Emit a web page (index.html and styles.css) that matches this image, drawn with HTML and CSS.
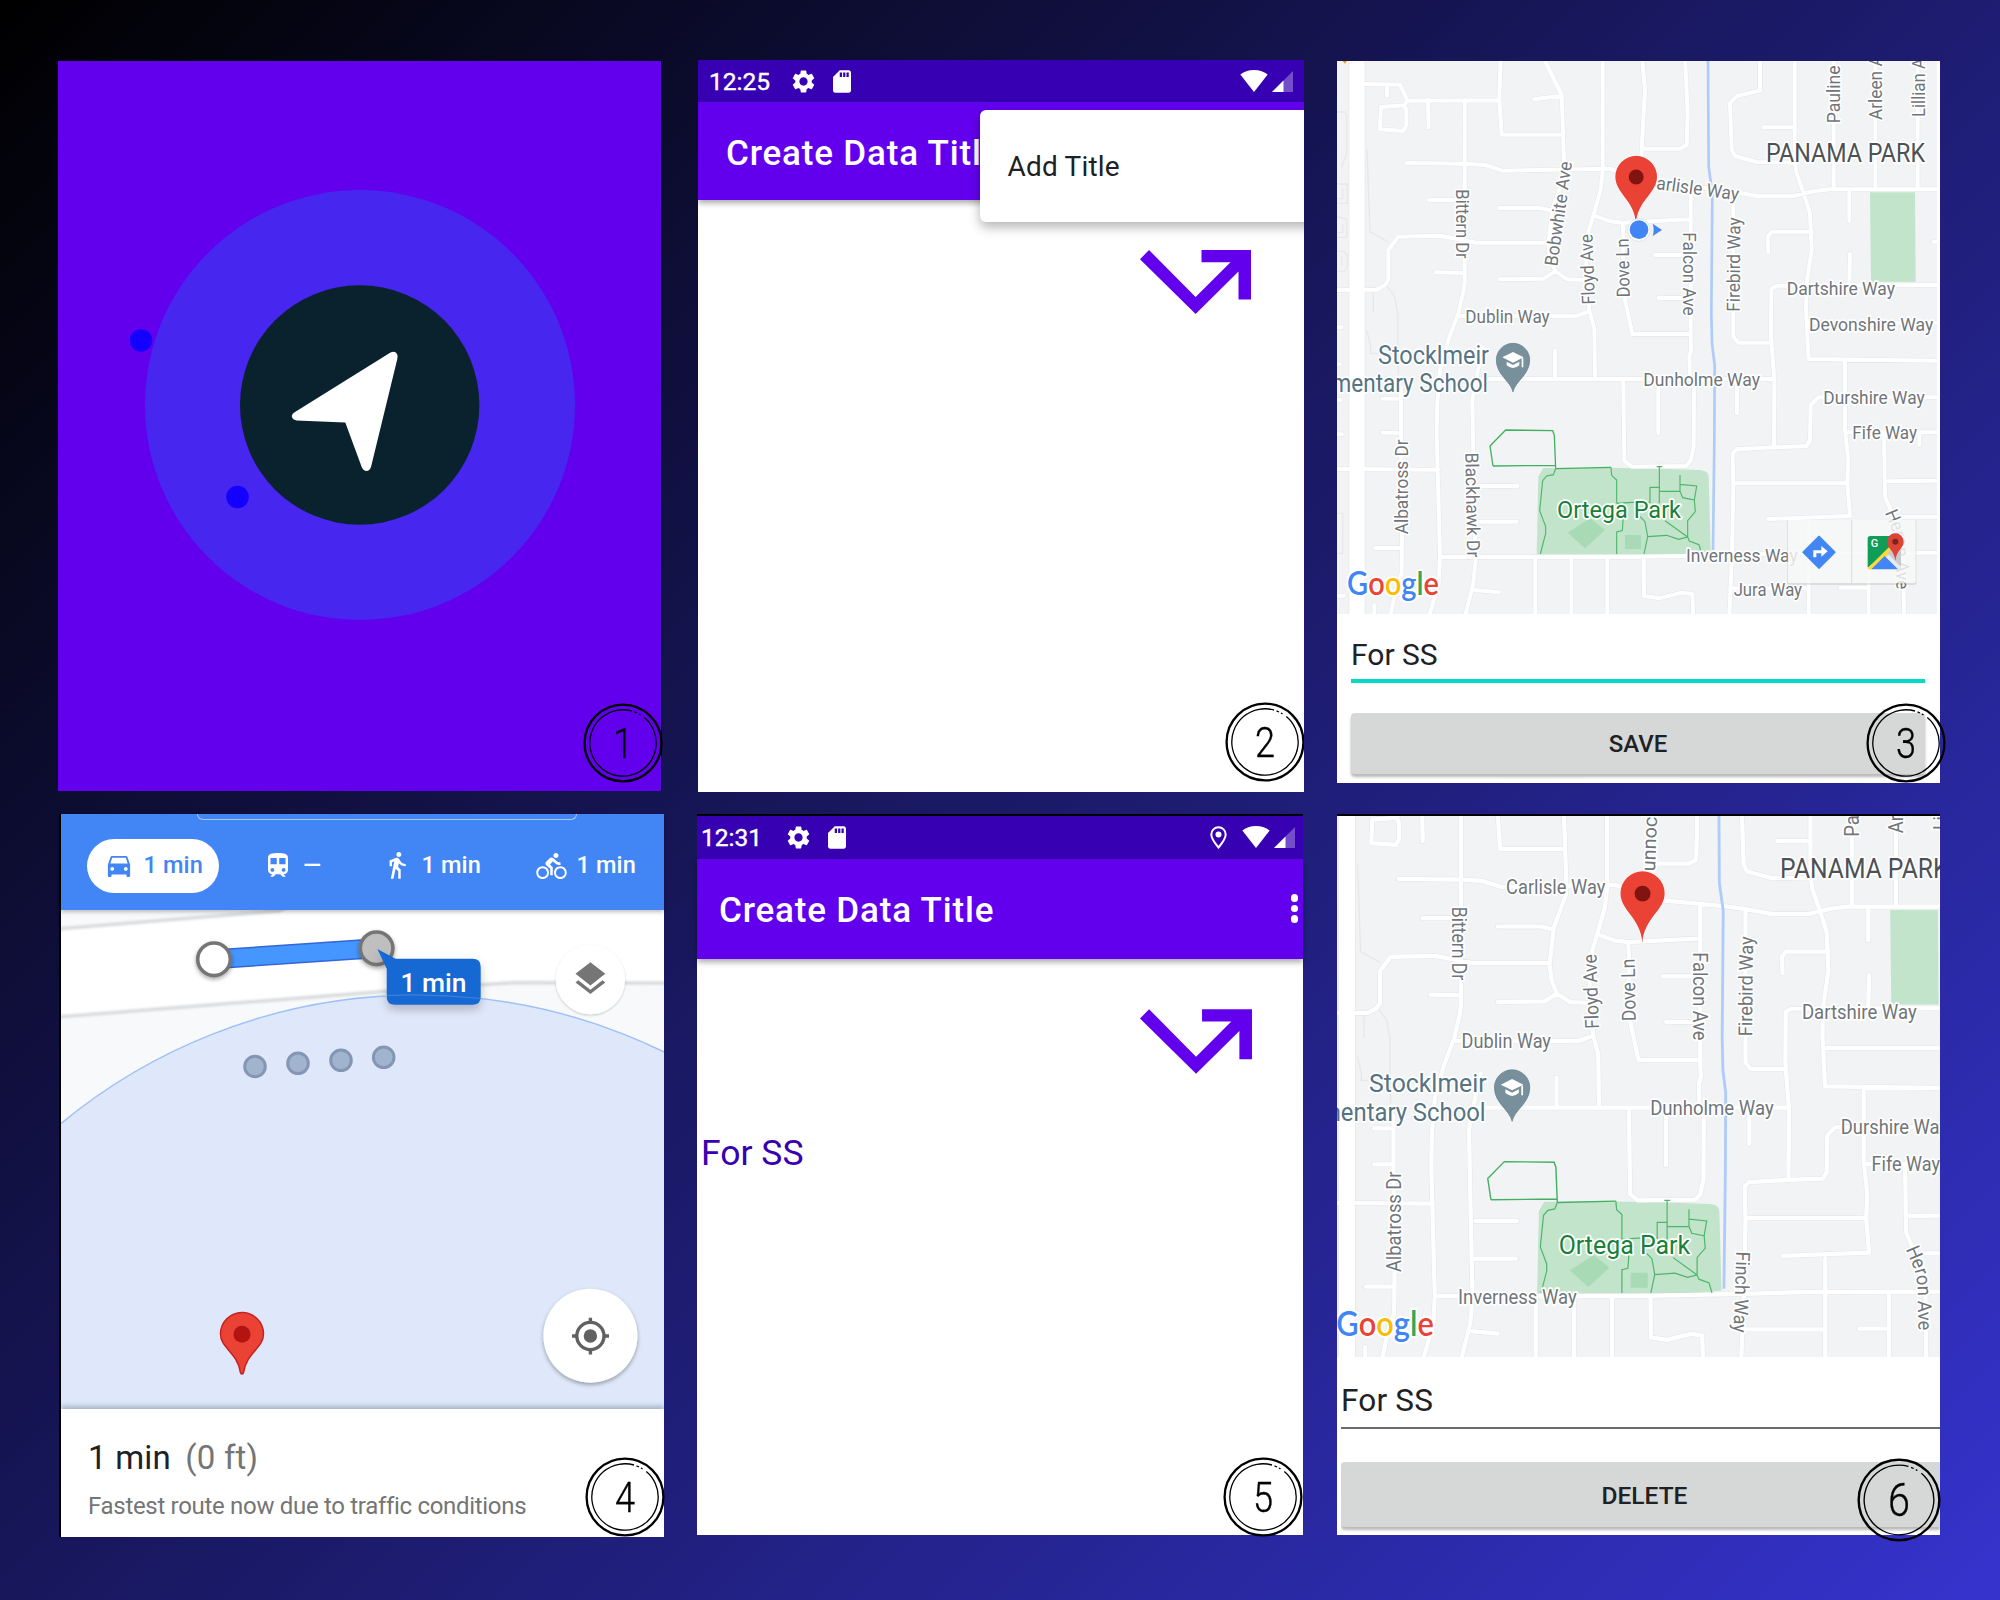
FILE: index.html
```html
<!DOCTYPE html>
<html lang="en">
<head>
<meta charset="utf-8">
<title>Create Data Title – app walkthrough</title>
<link rel="stylesheet" href="styles.css">
</head>
<body>
<svg class="defs" width="0" height="0" aria-hidden="true">
  <defs>
    <symbol id="i-gear" viewBox="2 2 20 20"><path d="M19.14 12.94c.04-.3.06-.61.06-.94 0-.32-.02-.64-.07-.94l2.03-1.58c.18-.14.23-.41.12-.61l-1.92-3.32c-.12-.22-.37-.29-.59-.22l-2.39.96c-.5-.38-1.03-.7-1.62-.94l-.36-2.54c-.04-.24-.24-.41-.48-.41h-3.84c-.24 0-.43.17-.47.41l-.36 2.54c-.59.24-1.13.57-1.62.94l-2.39-.96c-.22-.08-.47 0-.59.22L2.74 8.87c-.12.21-.08.47.12.61l2.03 1.58c-.05.3-.09.63-.09.94s.02.64.07.94l-2.03 1.58c-.18.14-.23.41-.12.61l1.92 3.32c.12.22.37.29.59.22l2.39-.96c.5.38 1.03.7 1.62.94l.36 2.54c.05.24.24.41.48.41h3.84c.24 0 .44-.17.47-.41l.36-2.54c.59-.24 1.13-.56 1.62-.94l2.39.96c.22.08.47 0 .59-.22l1.92-3.32c.12-.22.07-.47-.12-.61l-2.01-1.58zM12 15.6c-1.98 0-3.6-1.62-3.6-3.6s1.62-3.6 3.6-3.6 3.6 1.62 3.6 3.6-1.62 3.6-3.6 3.6z"/></symbol>
    <symbol id="i-sd" viewBox="4 2 16 20"><path d="M18 2h-8L4.02 8 4 20c0 1.1.9 2 2 2h12c1.1 0 2-.9 2-2V4c0-1.1-.9-2-2-2zm-6 6h-2V4h2v4zm3 0h-2V4h2v4zm3 0h-2V4h2v4z"/></symbol>
    <symbol id="i-wifi" viewBox="0 0 28 22"><path d="M14 22 .3 4.6C3.500 1.700 8.500 0 14 0s10.500 1.700 13.700 4.600z"/></symbol>
    <symbol id="i-signal" viewBox="0 0 21 21"><path opacity=".3" d="M0 21 21 0v21z"/><path d="M0 21 11.500 9.500V21z"/></symbol>
    <symbol id="i-place" viewBox="0 0 17 23"><path d="M8.500 1.300c-4 0-7.200 3.100-7.200 7.200 0 4.500 7.200 13 7.200 13s7.200-8.500 7.200-13c0-4.100-3.200-7.200-7.200-7.200z" fill="none" stroke="currentColor" stroke-width="2"/><circle cx="8.500" cy="8.500" r="3"/></symbol>
    <symbol id="i-route" viewBox="0 0 112 64"><path d="M9 0 0 9.200 55.600 64 98.500 21.500V49.500H111V0H61.500V12.300H90.500L55.600 47z"/></symbol>
    <symbol id="i-car" viewBox="3 4 18 17"><path d="M18.920 5.010C18.720 4.420 18.160 4 17.500 4h-11c-.66 0-1.210.42-1.420 1.010L3 11v9c0 .55.45 1 1 1h1c.55 0 1-.45 1-1v-1h12v1c0 .55.45 1 1 1h1c.55 0 1-.45 1-1v-9l-2.080-5.990zM6.500 16c-.83 0-1.500-.67-1.500-1.500S5.670 13 6.500 13s1.500.67 1.500 1.500S7.330 16 6.500 16zm11 0c-.83 0-1.500-.67-1.500-1.500s.67-1.500 1.500-1.500 1.500.67 1.500 1.500-.67 1.500-1.500 1.500zM5 10l1.500-4.500h11L19 10H5z"/></symbol>
    <symbol id="i-train" viewBox="4 2 16 20"><path d="M12 2c-4.420 0-8 .5-8 4v9.500C4 17.430 5.570 19 7.500 19L6 20.500v.5h2.200l2-2h3.600l2 2H18v-.5L16.500 19c1.930 0 3.500-1.570 3.500-3.500V6c0-3.500-3.580-4-8-4zM7.500 17c-.83 0-1.500-.67-1.500-1.500S6.670 14 7.500 14s1.500.67 1.500 1.500S8.330 17 7.500 17zm3.500-6H6V6h5v5zm5.500 6c-.83 0-1.500-.67-1.500-1.500s.67-1.500 1.500-1.500 1.500.67 1.500 1.500-.67 1.500-1.500 1.500zm1.500-6h-5V6h5v5z"/></symbol>
    <symbol id="i-walk" viewBox="5 1.400 14 21.800"><path d="M13.500 5.500c1.100 0 2-.9 2-2s-.9-2-2-2-2 .9-2 2 .9 2 2 2zM9.800 8.900 7 23h2.100l1.800-8 2.100 2v6h2v-7.500l-2.100-2 .6-3C14.800 12 16.800 13 19 13v-2c-1.900 0-3.500-1-4.300-2.400l-1-1.600c-.4-.6-1-1-1.700-1-.3 0-.5.1-.8.1L6 8.300V13h2V9.600l1.800-.7"/></symbol>
    <symbol id="i-bike" viewBox="0 1.500 24 20.500"><path d="M15.500 5.500c1.100 0 2-.9 2-2s-.9-2-2-2-2 .9-2 2 .9 2 2 2zM5 12c-2.800 0-5 2.200-5 5s2.200 5 5 5 5-2.200 5-5-2.200-5-5-5zm0 8.500c-1.900 0-3.500-1.600-3.500-3.500s1.600-3.500 3.500-3.500 3.500 1.600 3.500 3.500-1.600 3.500-3.500 3.500zm5.800-10 2.400-2.400.8.800c1.300 1.300 3 2.100 5.100 2.100V9c-1.500 0-2.700-.6-3.600-1.500l-1.900-1.900c-.5-.4-1-.6-1.600-.6s-1.100.2-1.400.6L7.800 8.400c-.4.4-.6.9-.6 1.400 0 .6.2 1.100.6 1.400L11 14v5h2v-6.200l-2.200-2.300zM19 12c-2.800 0-5 2.200-5 5s2.200 5 5 5 5-2.200 5-5-2.200-5-5-5zm0 8.500c-1.900 0-3.500-1.600-3.500-3.500s1.600-3.500 3.500-3.500 3.500 1.600 3.500 3.500-1.600 3.500-3.500 3.500z"/></symbol>
    <symbol id="badge-ring" viewBox="0 0 80 80">
      <circle cx="40" cy="40" r="38.400" fill="none" stroke="#000" stroke-width="2.300"/>
      <path d="M61.300 14.500A33.200 33.200 0 1 1 49 8M51.500 8.900L54 10M56 11L57.500 11.900" fill="none" stroke="#000" stroke-width="1.300"/>
    </symbol>

    <!-- street network shared by both maps -->
    <g id="streets" fill="none" stroke-linejoin="round" stroke-linecap="round">
      <path id="lanes" d="M108 102L210 104L232 152L505 151M171 104V137M232 152L222 166L153 171L150 238L220 243L229 225V180L222 166M294 150L296 232M404 150V700L400 725L385 790L355 870L330 960L322 1060L320 1150L323 1260L330 1520L326 1600L297 1700M512 20L508 150L515 254H700M645 20V33L695 135L702 330V383L667 477L655 581L661 628L676 664L712 688L765 690M612 148L695 137M228 339L404 341L465 345L518 362L840 356L870 366L983 401L1148 416L1211 425L1285 439H1387L1455 423L1500 418H1830M295 450H404M508 474H630L667 482M10 720L140 719L165 705L175 690V600L205 560L330 557L440 578H655M318 667L404 669M508 688L640 686L676 664M818 20V363L812 420L790 496L773 552L768 650L778 779L793 836L795 985M790 496L840 514L878 518L1080 508M878 518L880 560L878 700L885 750L907 852H1080M385 797L735 799L775 785M936 20L945 120L935 300L930 390M935 296H1050L1070 285L1073 190L1065 20M1082 412V870L1084 900L1078 918L1080 985L1092 1010L1091 1190L1082 1232L1068 1248L905 1250L883 1232L880 990M975 615H1082M985 744H1082M985 990V1150M1221 990V1090M1290 122L1220 138L1200 160L1205 300L1215 318L1280 336L1395 338M1290 20V122M1300 232H1392M1394 20V330L1400 370L1422 432L1440 490L1445 600L1430 700L1428 780L1434 900L1436 927L1830 932M1511 20V418M1636 20V418M1763 20V418M1558 425V513M1560 612L1558 700M1811 575H1830M1315 606L1313 560L1325 545H1445M1210 430V860L1225 878H1320M1830 705L1340 707L1324 716L1323 860L1333 990L1332 1190M1430 818H1830M440 987H1333M675 902V987M460 890L442 970L427 1050L430 1210L437 1530L430 1600L405 1700M213 1010V1160L216 1450L215 1570L195 1630L181 1700M158 1046H213M158 1148H213M135 1494H213M10 1257L325 1259M445 1308H563M445 1415H560M335 1521H900L1200 1515L1370 1510L1830 1508M616 1521V1700M724 1521V1700M941 1525L942 1638L988 1645L1055 1628L1087 1632L1090 1700M832 1521V1700M432 1620L508 1627M133 1665V1700M10 832H35M10 943H30M10 1050H33M10 1153H36M10 1637H42M1332 1192L1220 1198L1208 1210L1210 1310L1206 1510L1198 1700M1332 1192L1430 1188L1440 1170L1442 1065L1465 1042H1830M1545 932V1140L1555 1230L1552 1300L1560 1398L1315 1407M1212 1300H1552M1550 1147H1830M1768 1150V1185M1662 1147L1665 1340L1690 1400L1720 1520L1722 1700M1668 1294L1830 1292M1720 1400H1830M1436 1415V1700M1616 1510V1700M1532 1613H1616M1200 1615H1436"/>
    </g>
    <g id="map-base">
      <rect x="0" y="0" width="1900" height="1720" fill="#f1f3f4"/>
      <g fill="none" stroke="#e6e8ea" stroke-width="4">
        <path d="M111 297L120 545L175 576M165 700L194 740L203 790V900M130 730V788M21 186H46L50 200V310L35 352M21 402H52V460H21M38 415V446H21M21 500L50 508V562H21M38 524V548H21M21 604H42L52 615V650L42 664H21M36 618V648M110 840L122 890V910H205V975M21 1390H38V1510H21"/>
      </g>
      <path d="M81 0V1720" stroke="#e4e6e8" stroke-width="50"/>
      <use href="#streets" stroke="#e4e6e8" stroke-width="15"/>
      <path d="M1620 427H1755L1757 695H1623z" fill="#c1e4ca"/>
      <path d="M640 1254H900L1110 1260Q1135 1262 1136 1280L1142 1505L1080 1512L620 1513L625 1280z" fill="#c1e4ca"/>
      <path d="M713 1448L765 1495L825 1440L780 1405zM885 1455H933V1497H885z" fill="#a8dab5"/>
      <path d="M81 0V1720" stroke="#fff" stroke-width="46"/>
      <use href="#streets" stroke="#fff" stroke-width="12"/>
      <path d="M1134 20L1136 350L1147 430L1144 790L1146 880L1154 945L1153 1170L1149 1500" fill="none" stroke="#aecbfa" stroke-width="8"/>
      <path d="M489 1248L480 1188L527 1140L668 1142L673 1156L677 1256M489 1248L677 1246M677 1256L843 1252" fill="none" stroke="#42b060" stroke-width="4"/>
      <path d="M843 1252L845 1276L860 1290V1360M677 1256L670 1274L650 1278L638 1292L629 1382L647 1430V1450L631 1512M860 1360L905 1357H960V1312H990M988 1250V1360M980 1250H997M988 1324H1050V1275M1050 1303L1100 1308L1093 1350L1058 1343L1050 1324M1093 1350L1096 1385L1073 1412V1460M860 1512V1446L877 1442L880 1400M942 1512L953 1460L945 1415L930 1400M953 1460L1010 1456L1046 1468L1073 1461L1078 1473L1107 1484L1115 1512M1005 1412L1073 1461" fill="none" stroke="#4fb56c" stroke-width="3.400"/>
      <g class="label">
        <text transform="translate(379 418) rotate(90)" textLength="208" lengthAdjust="spacingAndGlyphs">Bittern Dr</text>
        <text transform="translate(795 763) rotate(-92)" textLength="211" lengthAdjust="spacingAndGlyphs">Floyd Ave</text>
        <text transform="translate(899 742) rotate(-91)" textLength="177" lengthAdjust="spacingAndGlyphs">Dove Ln</text>
        <text x="406" y="818" textLength="253" lengthAdjust="spacingAndGlyphs">Dublin Way</text>
        <text transform="translate(1060 547) rotate(90)" textLength="250" lengthAdjust="spacingAndGlyphs">Falcon Ave</text>
        <text transform="translate(1229 785) rotate(-89.500)" textLength="283" lengthAdjust="spacingAndGlyphs">Firebird Way</text>
        <text transform="translate(1531 220) rotate(-90)" textLength="240" lengthAdjust="spacingAndGlyphs">Pauline Dr</text>
        <text transform="translate(1657 210) rotate(-90)" textLength="245" lengthAdjust="spacingAndGlyphs">Arleen Ave</text>
        <text transform="translate(1784 201) rotate(-90)" textLength="226" lengthAdjust="spacingAndGlyphs">Lillian Ave</text>
        <text x="1370" y="735" textLength="325" lengthAdjust="spacingAndGlyphs">Dartshire Way</text>
        <text x="940" y="1007" textLength="350" lengthAdjust="spacingAndGlyphs">Dunholme Way</text>
        <text x="1480" y="1063" textLength="304" lengthAdjust="spacingAndGlyphs">Durshire Way</text>
        <text x="1567" y="1168" textLength="194" lengthAdjust="spacingAndGlyphs">Fife Way</text>
        <text transform="translate(235 1453) rotate(-90)" textLength="285" lengthAdjust="spacingAndGlyphs">Albatross Dr</text>
        <text><textPath href="#heron" textLength="236" lengthAdjust="spacingAndGlyphs">Heron Ave</textPath></text>
      </g>
      <g class="label label-area"><text x="1308" y="336" textLength="477" lengthAdjust="spacingAndGlyphs">PANAMA PARK</text></g>
      <g class="label label-school">
        <text x="144" y="942" textLength="333" lengthAdjust="spacingAndGlyphs">Stocklmeir</text>
        <text x="-86" y="1025" textLength="560" lengthAdjust="spacingAndGlyphs">Elementary School</text>
      </g>
      <g class="label label-park"><text x="681" y="1403" textLength="372" lengthAdjust="spacingAndGlyphs">Ortega Park</text></g>
      <path d="M549 1026C543 994 499 975 499 930A50 50 0 0 1 599 930C599 975 555 994 549 1026z" fill="#78909c" stroke="#607d8b" stroke-width="2"/>
      <path d="M549 906L581 922L549 938L517 922zM530 935L549 945L568 935V946Q549 962 530 946zM575 925H580V952H575z" fill="#fff"/>
      <text class="google" x="51" y="1635" textLength="276" lengthAdjust="spacingAndGlyphs"><tspan fill="#4285f4">G</tspan><tspan fill="#ea4335">o</tspan><tspan fill="#fbbc04">o</tspan><tspan fill="#4285f4">g</tspan><tspan fill="#34a853">l</tspan><tspan fill="#ea4335">e</tspan></text>
    </g>
    <path id="heron" d="M1664 1388L1686 1440Q1700 1480 1698 1530L1700 1640"/>
    <g id="map-pin">
      <path d="M918 521C914 450 856 430 856 380A62.500 62.500 0 0 1 981 380C981 430 922 450 918 521z" fill="#ea4335" stroke="#fff" stroke-width="3" paint-order="stroke"/>
      <circle cx="918.500" cy="381" r="22.500" fill="#811411"/>
    </g>
  </defs>
</svg>

<main class="board">
  <div class="column column-left">
    <section class="screen splash">
      <svg class="fill" viewBox="58 61 603 730">
        <circle cx="360" cy="405" r="215" fill="#4726f0"/>
        <circle cx="359.700" cy="405" r="119.700" fill="#0a222e"/>
        <circle cx="141" cy="340.500" r="11.200" fill="#1400ff"/>
        <circle cx="237.500" cy="497" r="11.300" fill="#1400ff"/>
        <path d="M390.500 352.500Q395 350.500 397 354Q398.200 356 397.300 359L371 467Q369.500 471 366.500 471Q363.500 471 361.700 467L345.300 422.500L296.500 420.500Q292 419.500 291.800 416Q292 413.500 295 412z" fill="#fff"/>
      </svg>
      <div class="badge badge-1"><svg><use href="#badge-ring"/></svg><span>1</span></div>
    </section>
    <section class="screen directions">
      <header class="modes">
        <div class="search-edge"></div>
        <div class="mode-row">
          <div class="mode mode-active"><svg class="ic-car"><use href="#i-car"/></svg><span>1 min</span></div>
          <div class="mode"><svg class="ic-train"><use href="#i-train"/></svg><span>—</span></div>
          <div class="mode mode-walk"><svg class="ic-walk"><use href="#i-walk"/></svg><span>1 min</span></div>
          <div class="mode"><svg class="ic-bike"><use href="#i-bike"/></svg><span>1 min</span></div>
        </div>
      </header>
      <div class="route-map">
        <svg class="fill" viewBox="61 910 603 499">
          <defs>
            <filter id="soft" x="-50%" y="-50%" width="200%" height="200%"><feDropShadow dx="0" dy="2" stdDeviation="2" flood-opacity=".35"/></filter>
            <filter id="faint" x="-50%" y="-50%" width="200%" height="200%"><feDropShadow dx="0" dy="1" stdDeviation="1" flood-opacity=".22"/></filter>
            <filter id="lift" x="-50%" y="-50%" width="200%" height="220%"><feDropShadow dx="0" dy="5" stdDeviation="5" flood-opacity=".22"/></filter>
            <filter id="haze"><feGaussianBlur stdDeviation="1.200"/></filter>
          </defs>
          <rect x="61" y="910" width="603" height="499" fill="#f7f9fa"/>
          <path d="M50 929.500L279 911L300 900H680V983L516 982.500L484 984.500L383 991.500L50 1017.500z" fill="#fff" stroke="#d9dbde" stroke-width="3.500" filter="url(#haze)"/>
          <circle cx="418" cy="1555" r="560" fill="#dfe8fa"/>
          <path d="M214 959.300L376.600 948.300" stroke="#3367d6" stroke-width="20"/>
          <path d="M214 959.300L376.600 948.300" stroke="#4596ff" stroke-width="17"/>
          <circle cx="214" cy="959.300" r="16.300" fill="#fff" stroke="#757575" stroke-width="3.600" filter="url(#soft)"/>
          <circle cx="376.600" cy="948.300" r="16.300" fill="#bfbfbf" stroke="#757575" stroke-width="3.600" filter="url(#soft)"/>
          <path d="M377.400 949L395.500 958.700H472.700Q480.700 958.700 480.700 966.700V996.700Q480.700 1004.700 472.700 1004.700H394.700Q386.700 1004.700 386.700 996.700V968.700z" fill="#1967d2" filter="url(#lift)"/>
          <text class="callout" x="400.500" y="992" textLength="66" lengthAdjust="spacingAndGlyphs">1 min</text>
          <circle cx="418" cy="1555" r="560" fill="none" stroke="#8ab4f8" stroke-opacity=".8" stroke-width="1.400" clip-path="url(#outside-callout)"/>
          <clipPath id="outside-callout"><path d="M61 910H386V1409H61zM481 910H664V1409H481z"/></clipPath>
          <path d="M387 995.500Q434 993.500 480.700 998.500" fill="none" stroke="#3f80dc" stroke-width="1.200"/>
          <g fill="#a0b5cd" stroke="#8496b3" stroke-width="3">
            <circle cx="255" cy="1066.500" r="10.300"/><circle cx="298" cy="1063.300" r="10.300"/><circle cx="341" cy="1060.300" r="10.300"/><circle cx="383.700" cy="1057.300" r="10.300"/>
          </g>
          <circle cx="590.400" cy="979.500" r="34.800" fill="#fff" filter="url(#faint)"/>
          <path d="M590.400 962.300L605.300 973.800L590.400 985.500L575.500 973.800zM575.500 982.500L578.300 980.300L590.400 989.700L602.500 980.300L605.300 982.500L590.400 993.900z" fill="#757575"/>
          <path d="M242 1374Q240.700 1374 240.300 1372C237 1352 220.500 1348 220.500 1334A21.500 21.500 0 0 1 263.500 1334C263.500 1348 247 1352 243.700 1372Q243.300 1374 242 1374z" fill="#ea4335" stroke="#c5221f" stroke-width="1.500"/>
          <circle cx="242" cy="1334.300" r="8.500" fill="#b31412"/>
          <circle cx="590.400" cy="1335.700" r="47" fill="#fff" filter="url(#soft)"/>
          <g fill="none" stroke="#616161" stroke-width="3.400"><circle cx="590.400" cy="1336" r="13.600"/><path d="M590.400 1317.700V1323M590.400 1349V1354.500M572 1336H577M603.500 1336H609"/></g>
          <circle cx="590.400" cy="1336" r="6.700" fill="#616161"/>
        </svg>
      </div>
      <footer class="summary">
        <p class="eta">1 min <span>(0 ft)</span></p>
        <p class="note">Fastest route now due to traffic conditions</p>
      </footer>
      <div class="badge badge-4"><svg><use href="#badge-ring"/></svg><span>4</span></div>
    </section>
  </div>

  <div class="column column-mid">
    <section class="screen app app-menu">
      <div class="status"><span class="clock">12:25</span><svg class="ic-gear"><use href="#i-gear"/></svg><svg class="ic-sd"><use href="#i-sd"/></svg><svg class="ic-wifi"><use href="#i-wifi"/></svg><svg class="ic-signal"><use href="#i-signal"/></svg></div>
      <header class="appbar"><h1>Create Data Title</h1></header>
      <div class="content"><svg class="ic-route"><use href="#i-route"/></svg></div>
      <div class="popup">Add Title</div>
      <div class="badge badge-2"><svg><use href="#badge-ring"/></svg><span>2</span></div>
    </section>
    <section class="screen app app-list">
      <div class="status"><span class="clock">12:31</span><svg class="ic-gear"><use href="#i-gear"/></svg><svg class="ic-sd"><use href="#i-sd"/></svg><svg class="ic-place"><use href="#i-place"/></svg><svg class="ic-wifi"><use href="#i-wifi"/></svg><svg class="ic-signal"><use href="#i-signal"/></svg></div>
      <header class="appbar"><h1>Create Data Title</h1><div class="kebab"><i></i><i></i><i></i></div></header>
      <div class="content"><svg class="ic-route"><use href="#i-route"/></svg><p class="item">For SS</p></div>
      <div class="badge badge-5"><svg><use href="#badge-ring"/></svg><span>5</span></div>
    </section>
  </div>

  <div class="column column-right">
    <section class="screen place place-new">
      <svg class="map" viewBox="21 33 1800 1659" preserveAspectRatio="none">
        <use href="#map-base"/>
        <path d="M38 33H50L45 41z" fill="#f29900"/>
        <g class="label">
          <text transform="translate(682 650) rotate(-82)" textLength="316" lengthAdjust="spacingAndGlyphs">Bobwhite Ave</text>
          <text transform="translate(944 412) rotate(8)" textLength="283" lengthAdjust="spacingAndGlyphs">Carlisle Way</text>
          <text x="1437" y="842" textLength="373" lengthAdjust="spacingAndGlyphs">Devonshire Way</text>
          <text x="1068" y="1537" textLength="335" lengthAdjust="spacingAndGlyphs">Inverness Way</text>
          <text x="1211" y="1638" textLength="205" lengthAdjust="spacingAndGlyphs">Jura Way</text>
          <text transform="translate(406 1208) rotate(89)" textLength="314" lengthAdjust="spacingAndGlyphs">Blackhawk Dr</text>
        </g>
        <use href="#map-pin"/>
        <circle cx="927" cy="540" r="34" fill="#fff" stroke="#d5d7da" stroke-width="2"/>
        <circle cx="927" cy="539" r="28" fill="#4285f4"/>
        <path d="M968 521L996 540L968 558Q974 540 968 521z" fill="#4285f4"/>
        <rect x="1371" y="1411" width="388" height="193" rx="6" fill="#000" fill-opacity=".12"/>
        <rect x="1373" y="1410" width="384" height="190" rx="5" fill="#fff" fill-opacity=".8"/>
        <path d="M1565 1410V1600" stroke="#dadce0" stroke-width="3"/>
        <path d="M1467 1459L1515 1507L1467 1555L1419 1507z" fill="#4285f4" stroke="#4285f4" stroke-width="4" stroke-linejoin="round"/>
        <path d="M1450 1522V1501H1474V1488L1493 1504L1474 1520V1510H1459V1522z" fill="#fff"/>
        <rect x="1613" y="1458" width="100" height="100" rx="8" fill="#e8eaed"/>
        <path d="M1621 1458H1690L1695 1485L1613 1553V1466Q1613 1458 1621 1458z" fill="#0f9d58"/>
        <path d="M1613 1555L1690 1478L1700 1490L1630 1558H1617Q1613 1558 1613 1555z" fill="#ffd73f"/>
        <path d="M1624 1558L1664 1518L1704 1558z" fill="#4285f4"/>
        <path d="M1672 1510L1700 1483L1713 1500V1550z" fill="#c8cacd"/>
        <path d="M1696 1532C1693 1500 1671 1495 1671 1475A25 25 0 0 1 1721 1475C1721 1495 1699 1500 1696 1532z" fill="#db4437"/>
        <circle cx="1696" cy="1475" r="9" fill="#7b231e"/>
        <text class="maps-g" x="1622" y="1490">G</text>
      </svg>
      <div class="form">
        <div class="field">For SS</div>
        <div class="button">SAVE</div>
      </div>
      <div class="badge badge-3"><svg><use href="#badge-ring"/></svg><span>3</span></div>
    </section>
    <section class="screen place place-edit">
      <svg class="map" viewBox="53 161 1708 1532.500" preserveAspectRatio="none">
        <use href="#map-base"/>
        <g class="label">
          <text x="532" y="383" textLength="281" lengthAdjust="spacingAndGlyphs">Carlisle Way</text>
          <text transform="translate(954 318) rotate(-88)" textLength="183" lengthAdjust="spacingAndGlyphs">unnock</text>
          <text x="396" y="1543" textLength="336" lengthAdjust="spacingAndGlyphs">Inverness Way</text>
          <text transform="translate(1184 1394) rotate(92)" textLength="230" lengthAdjust="spacingAndGlyphs">Finch Way</text>
        </g>
        <use href="#map-pin"/>
      </svg>
      <div class="form">
        <div class="field">For SS</div>
        <div class="button">DELETE</div>
      </div>
      <div class="badge badge-6"><svg><use href="#badge-ring"/></svg><span>6</span></div>
    </section>
  </div>
</main>
</body>
</html>
```
FILE: styles.css
```css
* { box-sizing: border-box; }
body, h1, p { margin: 0; }
body { font-family: Roboto, "Liberation Sans", sans-serif; color: #202124; }
svg { display: block; }
.defs { position: absolute; }

.board {
  display: flex;
  width: 2000px;
  height: 1600px;
  overflow: hidden;
  background: linear-gradient(135deg, #000 0%, #3533cd 100%);
}
.column { display: flex; flex-direction: column; flex: none; }
.column-left { width: 606px; margin-left: 58px; padding-top: 61px; gap: 23px; }
.column-mid { width: 607px; margin-left: 33px; padding-top: 60px; gap: 22px; }
.column-right { width: 603px; margin-left: 33px; padding-top: 61px; gap: 33px; }

.screen { position: relative; display: flex; flex-direction: column; flex: none; }
.fill { width: 100%; height: 100%; }

/* numbered step marker */
.badge { position: absolute; display: flex; align-items: center; justify-content: center; width: 80px; height: 80px; }
.badge svg { position: absolute; inset: 0; width: 100%; height: 100%; overflow: visible; }
.badge span { color: #000; font-size: 43px; font-weight: 300; line-height: 1; transform: scaleX(.84); -webkit-text-stroke: .4px #000; }
.badge-1 { left: 525px; top: 642px; }
.badge-2 { left: 527px; top: 642px; }
.badge-3 { left: 529px; top: 642px; }
.badge-4 { left: 524px; top: 643px; }
.badge-5 { left: 526px; top: 641px; }
.badge-6 { left: 520px; top: 642px; width: 84px; height: 84px; }
.badge-6 span { font-size: 47px; }

/* splash */
.splash { width: 603px; height: 730px; background: #6200ee; box-shadow: 1px 0 0 #000; }

/* directions */
.directions { width: 603px; height: 723px; margin-left: 3px; background: #fff; box-shadow: -2px 0 0 #000; }
.modes { display: flex; flex-direction: column; height: 96px; background: #4285f4; box-shadow: 0 2px 4px rgba(0,0,0,.25); z-index: 1; }
.search-edge { width: 380px; height: 5.500px; margin-left: 136px; border: 1.500px solid #a9c8fb; border-top: 0; border-radius: 0 0 7px 7px; }
.mode-row { display: grid; grid-template-columns: 181.500px 119.500px 148px auto; align-items: center; height: 54px; margin: 18.500px 0 0 25.600px; }
.mode { display: flex; align-items: center; gap: 15px; color: #fff; fill: #fff; font-size: 23.500px; font-weight: 500; line-height: 55px; letter-spacing: .1px; }
.mode-active { width: 132.500px; height: 54px; padding-left: 20px; gap: 13px; border-radius: 27px; background: #fff; color: #4285f4; fill: #4285f4; }
.mode-walk { gap: 16px; }
.mode:last-child { gap: 10px; }
.ic-car { width: 24px; height: 21px; margin-top: 2px; }
.ic-train { width: 20px; height: 25px; }
.ic-walk { width: 18px; height: 27px; }
.ic-bike { width: 31px; height: 26px; }
.route-map { height: 499px; }
.callout { fill: #fff; font-size: 26px; font-weight: 500; }
.summary { position: relative; flex: 1; padding: 27px 0 0 27px; background: #fff; box-shadow: 0 -3px 5px rgba(60,80,110,.35); clip-path: inset(-12px 0 0 0); }
.eta { font-size: 33px; line-height: 43px; letter-spacing: .2px; }
.eta span { margin-left: 6px; color: #757575; }
.note { margin-top: 12px; color: #757575; font-size: 24px; line-height: 30px; white-space: nowrap; letter-spacing: -.31px; }

/* app screens */
.app { background: #fff; }
.app-menu { width: 606px; height: 732px; margin-left: 1px; overflow: hidden; }
.app-list { width: 606px; height: 718.500px; box-shadow: 0 -2px 0 #000; margin-top: 2px; }
.status { display: flex; align-items: center; height: 42px; padding: 0 11px 0 11px; background: #3700b3; color: #fff; fill: #fff; }
.clock { width: 83px; font-size: 24.500px; -webkit-text-stroke: .4px #fff; }
.ic-gear { width: 23px; height: 23px; }
.ic-sd { width: 18px; height: 23px; margin: 0 auto 0 18px; }
.ic-wifi { width: 28px; height: 22px; }
.ic-signal { width: 21px; height: 21px; margin-left: 4px; }
.ic-place { width: 17px; height: 23px; margin-right: 15px; }
.appbar { display: flex; align-items: center; height: 98px; padding-left: 28px; background: #6200ee; box-shadow: 0 3px 6px rgba(0,0,0,.35); }
.appbar h1 { padding-top: 5px; color: #fff; font-size: 35px; font-weight: 500; line-height: 44px; letter-spacing: .82px; white-space: nowrap; }
.content { padding: 50px 0 0 442px; }
.ic-route { width: 112px; height: 64px; fill: #6200ee; }
.popup { position: absolute; left: 281.500px; top: 49.500px; width: 340px; height: 112.500px; padding-left: 28px; border-radius: 6px; background: #fff; box-shadow: 0 5px 12px rgba(0,0,0,.3); font-size: 28px; line-height: 113px; letter-spacing: .2px; }
.app-list .status { height: 42.700px; padding: 0 8px 0 4px; }
.app-list .clock { width: 85.500px; }
.app-list .appbar { height: 100px; padding-left: 22px; }
.kebab { display: flex; flex-direction: column; gap: 3px; margin: 0 5px 0 auto; }
.kebab i { width: 7.500px; height: 7.500px; border-radius: 50%; background: #fff; }
.app-list .content { padding: 50px 0 0; }
.app-list .ic-route { width: 113px; height: 65px; margin-left: 443px; }
.item { margin: 58.500px 0 0 4px; color: #3700b3; font-size: 35.500px; line-height: 42px; }

/* place screens */
.place { width: 603px; background: #fff; }
.place-new { height: 721.500px; }
.place-edit { height: 719.500px; box-shadow: 0 -2px 0 #000; }
.map { width: 100%; height: 553px; }
.place-new .map { width: 600px; }
.place-edit .map { height: 541px; }
.label { fill: #70757a; stroke: #fff; stroke-width: 10px; stroke-linejoin: round; paint-order: stroke; font-size: 55px; }
.label-area { fill: #4d5156; font-size: 76px; }
.label-school { fill: #557383; font-size: 75px; }
.label-park { fill: #188038; font-size: 73px; }
.google { stroke: #fff; stroke-width: 12px; stroke-linejoin: round; paint-order: stroke; font-family: Lato, sans-serif; font-size: 97px; font-weight: 600; }
.maps-g { fill: #fff; font-size: 33px; font-weight: 500; }
.form { display: flex; flex-direction: column; margin: 22px 15px 0 14px; }
.field { height: 47px; border-bottom: 4px solid #03dac5; font-size: 30px; line-height: 38px; }
.button { height: 61px; margin-top: 29.500px; border-radius: 4px; background: #d6d7d7; box-shadow: 0 3px 3px rgba(0,0,0,.28); font-size: 24px; font-weight: 500; line-height: 63px; text-align: center; }
.place-edit .form { margin: 22px 0 0 4px; overflow: hidden; padding-bottom: 6px; }
.place-edit .field { height: 50px; border-bottom: 2px solid #6a6b6b; font-size: 31.500px; line-height: 44px; letter-spacing: .2px; }
.place-edit .button { height: 65px; margin-top: 33px; padding-left: 8px; border-radius: 4px 0 0 4px; font-size: 24.500px; line-height: 67px; }
```
